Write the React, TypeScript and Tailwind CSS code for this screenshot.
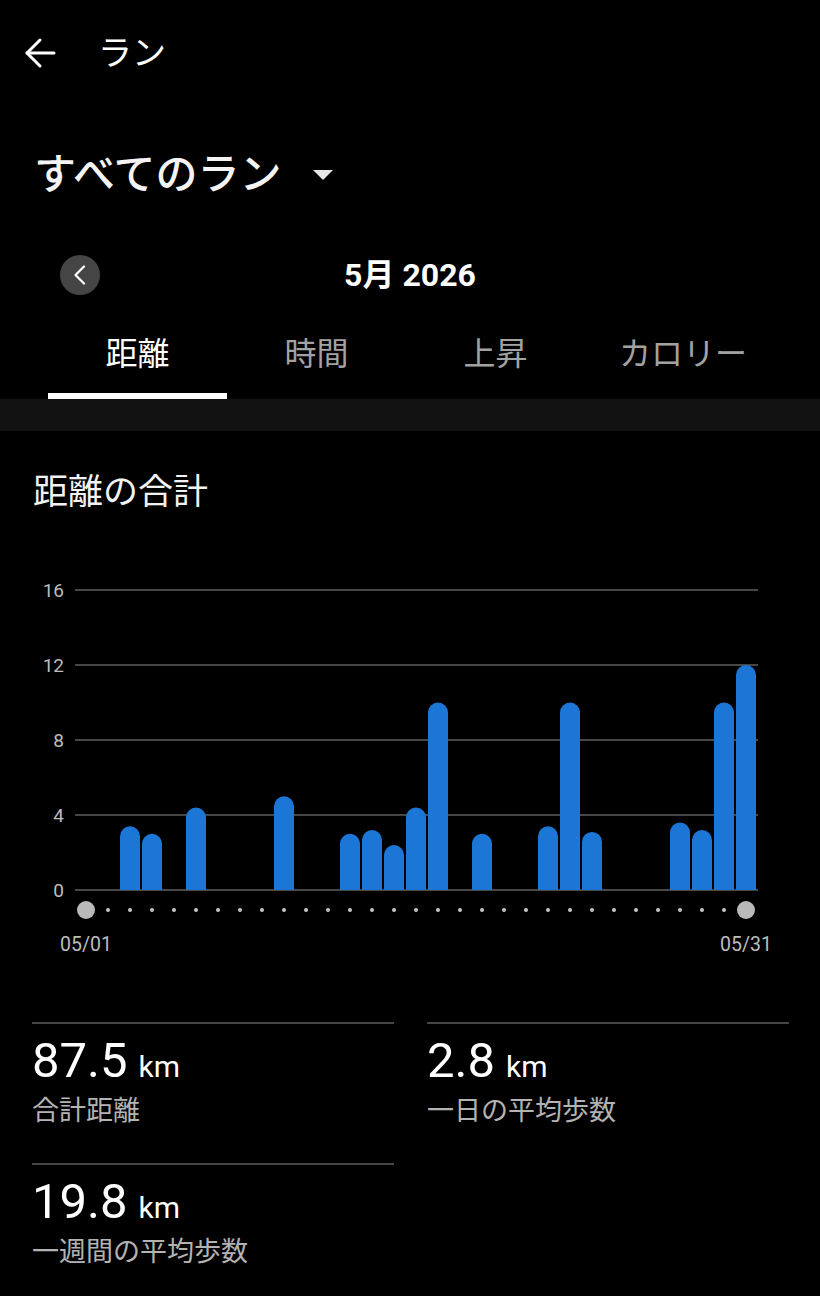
import React from "react";

const runs: Record<number, number> = {
  3: 3.4,
  4: 3.0,
  6: 4.4,
  10: 5.0,
  13: 3.0,
  14: 3.2,
  15: 2.4,
  16: 4.4,
  17: 10.0,
  19: 3.0,
  22: 3.4,
  23: 10.0,
  24: 3.1,
  28: 3.6,
  29: 3.2,
  30: 10.0,
  31: 12.0,
};

const tabs = [
  { label: "距離", width: "w-[179px]", active: true },
  { label: "時間", width: "w-[179px]", active: false },
  { label: "上昇", width: "w-[179px]", active: false },
  { label: "カロリー", width: "w-[196px]", active: false },
];

const stats = [
  { value: "87.5", label: "合計距離" },
  { value: "2.8", label: "一日の平均歩数" },
  { value: "19.8", label: "一週間の平均歩数" },
];

// chart geometry (svg coords)
const ZERO_Y = 337;
const PX_PER_KM = 18.75;
const dayX = (d: number) => 86 + 22 * (d - 1);

function Bar({ day, km }: { day: number; km: number }) {
  const x = dayX(day) - 10;
  const top = ZERO_Y - km * PX_PER_KM;
  const r = 10;
  return (
    <path
      d={`M${x} ${ZERO_Y} V${top + r} A${r} ${r} 0 0 1 ${x + 20} ${top + r} V${ZERO_Y} Z`}
      fill="#1b76d6"
    />
  );
}

function DistanceChart() {
  const grid = [
    { v: 16, y: 37 },
    { v: 12, y: 112 },
    { v: 8, y: 187 },
    { v: 4, y: 262 },
    { v: 0, y: 337 },
  ];

  const days = Array.from({ length: 31 }, (_, i) => i + 1);

  return (
    <svg width="820" height="460" viewBox="0 0 820 460" className="block">
      {grid.map((g) => (
        <g key={g.v}>
          <line x1="75" x2="758" y1={g.y} y2={g.y} stroke="#474747" strokeWidth="2" />
          <text
            x="64"
            y={g.y + 7}
            textAnchor="end"
            fontSize="19"
            fill="#bdbdbd"
            fontFamily="Roboto, sans-serif"
          >
            {g.v}
          </text>
        </g>
      ))}

      {Object.entries(runs).map(([d, km]) => (
        <Bar key={d} day={Number(d)} km={km} />
      ))}

      {days.map((d) =>
        d === 1 || d === 31 ? (
          <circle key={d} cx={dayX(d)} cy="357" r="9" fill="#b9b9b9" />
        ) : (
          <circle key={d} cx={dayX(d)} cy="357" r="2" fill="#c4c4c4" />
        )
      )}

      <text x={dayX(1)} y="398" textAnchor="middle" fontSize="19.5" fill="#bdbdbd" fontFamily="Roboto, sans-serif">
        05/01
      </text>
      <text x={dayX(31)} y="398" textAnchor="middle" fontSize="19.5" fill="#bdbdbd" fontFamily="Roboto, sans-serif">
        05/31
      </text>
    </svg>
  );
}

export default function App() {
  return (
    <div className="min-h-screen w-[820px] bg-black text-white font-['Roboto','Noto_Sans_CJK_JP',sans-serif]">

      {/* header */}
      <div className="h-[106px] flex items-center pl-6">
        <svg width="32" height="32" viewBox="0 0 32 32" fill="none" stroke="#ffffff" strokeWidth="3" strokeLinecap="round" strokeLinejoin="round">
          <path d="M30 16H3" />
          <path d="M16 3L3 16L16 29" />
        </svg>
        <span className="ml-[42px] text-[34px] leading-none">ラン</span>
      </div>

      {/* filter */}
      <div className="h-[138px] flex items-center pl-[34px]">
        <span className="text-[42px] leading-none font-medium text-[#f4f4f4]">すべてのラン</span>
        <svg width="20" height="10" viewBox="0 0 20 10" className="ml-[32px]">
          <path d="M0 0H20L10 10Z" fill="#e6e6e6" />
        </svg>
      </div>

      {/* month */}
      <div className="h-[62px] grid grid-cols-[1fr_auto_1fr] items-center">
        <div className="pl-[60px]">
          <button className="w-10 h-10 rounded-full bg-[#454545] flex items-center justify-center">
            <svg width="14" height="20" viewBox="0 0 14 20" fill="none" stroke="#ffffff" strokeWidth="2.2" strokeLinecap="round" strokeLinejoin="round">
              <path d="M11 1.5L2.5 10L11 18.5" />
            </svg>
          </button>
        </div>
        <span className="text-[32px] leading-none font-bold">5月 2026</span>
        <div />
      </div>

      {/* tabs */}
      <div className="flex pl-12">
        {tabs.map((t) => (
          <div key={t.label} className={`${t.width} flex flex-col`}>
            <div
              className={`h-[87px] pt-[9px] flex items-center justify-center text-[32px] leading-none ${
                t.active ? "text-white" : "text-[#a2a2a2]"
              }`}
            >
              {t.label}
            </div>
            <div className={`h-[6px] ${t.active ? "bg-white" : "bg-transparent"}`} />
          </div>
        ))}
      </div>
      <div className="h-[32px] bg-[#121212]" />

      {/* chart title */}
      <div className="h-[122px] flex items-center pl-[33px]">
        <span className="text-[35px] leading-none text-[#f2f2f2]">距離の合計</span>
      </div>

      <DistanceChart />

      {/* stats */}
      <div className="pt-[9px] pl-8 pr-[31px] grid grid-cols-2 gap-x-[33px]">
        {stats.map((s) => (
          <div key={s.label} className="h-[141px] border-t-2 border-[#454545] pt-3">
            <div className="flex items-baseline">
              <span className="text-[49px] leading-none">{s.value}</span>
              <span className="ml-[11px] text-[30px] leading-none">km</span>
            </div>
            <div className="mt-[9px] text-[27px] leading-[34px] text-[#b3b3b3]">{s.label}</div>
          </div>
        ))}
      </div>

    </div>
  );
}
